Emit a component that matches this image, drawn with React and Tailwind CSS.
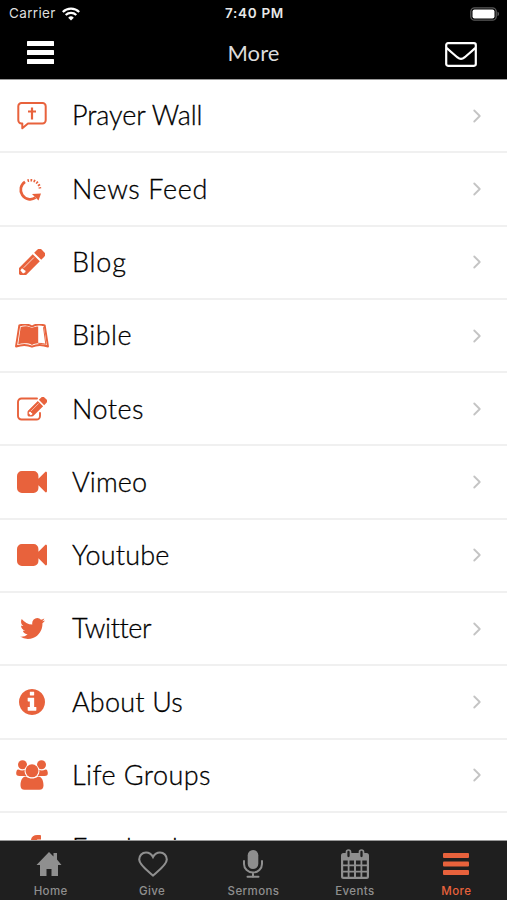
import { LuChevronRight } from "react-icons/lu";

const Svg = ({ box, className, children }) => (
  <svg viewBox={box} className={className} fill="currentColor" preserveAspectRatio="none">
    {children}
  </svg>
);

const PrayerIcon = () => (
  <Svg box="0 0 30 28" className="w-[30px] h-7">
    <path d="M4.5 1h21a3.2 3.2 0 0 1 3.2 3.2v14a3.2 3.2 0 0 1-3.2 3.2H11L5.3 26.300V21.4H4.5A3.2 3.2 0 0 1 1.3 18.2V4.2A3.2 3.2 0 0 1 4.5 1z" fill="none" stroke="currentColor" strokeWidth="2" strokeLinejoin="round" />
    <path d="M15 5.5v12M11 9.500h8" fill="none" stroke="currentColor" strokeWidth="2.200" />
  </Svg>
);

const FeedIcon = () => (
  <Svg box="0 0 24 24" className="w-6 h-6 -ml-1 mt-0.5">
    <path d="M7 3.800A9 9 0 1 0 17.500 19.700" fill="none" stroke="currentColor" strokeWidth="2.700" />
    <path d="M14 16l9-.5-2.500 7z" />
    <path d="M9.500 2.800A9.300 9.300 0 0 1 22 10.500" fill="none" stroke="currentColor" strokeWidth="2.600" strokeDasharray="1.600 1.500" />
  </Svg>
);

// Lápiz inclinado, compartido por Blog y Notes
const PencilShape = () => (
  <g transform="translate(.3 25.700) rotate(-45)">
    <path d="M.3 0v-1.500L2 -3.500Q3 -5 5 -5H24V5H5Q3 5 2 3.500L.3 1.500z" />
    <path d="M26 -5H30Q33.500 -5 33.500 -2V2Q33.500 5 30 5H26z" />
    <path d="M3.800 -2.200L6 -2.600Q7.800 -1.500 6.500 0Q8 1.500 6 2.600L3.500 1.800z" fill="#fff" />
    <path d="M8 -1.800H22.500" stroke="#fff" strokeWidth=".7" />
  </g>
);

const PencilIcon = () => (
  <Svg box="0 0 26 26" className="w-[26px] h-[26px]">
    <PencilShape />
  </Svg>
);

const BibleIcon = () => (
  <Svg box="0 0 34 24" className="w-[34px] h-6">
    <path d="M17 2.500C13.500 .2 8 .2 4.300 1.500L1 22.500c5-1.800 11.500-2 16 .2 4.500-2.200 11-2 16-.2L29.700 1.500C26 .2 20.500 .2 17 2.500z" fill="none" stroke="currentColor" strokeWidth="1.900" strokeLinejoin="round" />
    <path d="M17 4C13.500 1.800 9 1.800 5.700 3L3.200 20.300c4.300-1.300 9.800-1.500 13.800.6 1.600-1 3.700-1.500 6.200-1.600V2.500c-2.300 0-4.300.5-6.200 1.500z" />
    <path d="M23.200 19.300c2.800-.1 5.200.3 7.600 1L28.500 3.200" fill="none" stroke="currentColor" strokeWidth="1" />
  </Svg>
);

const NotesIcon = () => (
  <Svg box="0 0 30 24" className="w-[30px] h-6">
    <path d="M20 1.500H4.500A3.500 3.500 0 0 0 1 5v14a3.500 3.500 0 0 0 3.500 3.500h15A3.500 3.500 0 0 0 23 19v-3" fill="none" stroke="currentColor" strokeWidth="1.900" strokeLinecap="round" />
    <svg x="10.500" y="0" width="19.500" height="19.500" viewBox="0 0 26 26">
      <PencilShape />
    </svg>
  </Svg>
);

const VideoIcon = () => (
  <Svg box="0 256 1792 1280" className="w-[30px] h-[22px]">
    <path d="M1792 352v1088q0 42-39 59-13 5-25 5-27 0-45-19l-403-403v166q0 119-84.500 203.500t-203.500 84.500h-704q-119 0-203.500-84.500t-84.500-203.500v-704q0-119 84.500-203.500t203.500-84.500h704q119 0 203.500 84.500t84.500 203.500v165l403-402q18-19 45-19 12 0 25 5 39 17 39 59z" />
  </Svg>
);

const TwitterIcon = () => (
  <Svg box="108 256 1576 1280" className="w-[25px] h-[21px]">
    <path d="M1684 408q-67 98-162 167 1 14 1 42 0 130-38 259.500t-115.500 248.500-184.500 210.500-258 146-323 54.500q-271 0-496-145 35 4 78 4 225 0 401-138-105-2-188-64.500t-114-159.500q33 5 61 5 43 0 85-11-112-23-185.500-111.500t-73.500-205.500v-4q68 38 146 41-66-44-105-115t-39-154q0-88 44-163 121 149 294.500 238.500t371.500 99.500q-8-38-8-74 0-134 94.500-228.500t228.500-94.500q140 0 236 102 109-21 205-78-37 115-142 178 93-10 186-50z" />
  </Svg>
);

const InfoIcon = () => (
  <Svg box="128 128 1536 1536" className="w-[26px] h-[26px]">
    <path d="M1152 1376v-160q0-14-9-23t-23-9h-96v-512q0-14-9-23t-23-9h-320q-14 0-23 9t-9 23v160q0 14 9 23t23 9h96v320h-96q-14 0-23 9t-9 23v160q0 14 9 23t23 9h448q14 0 23-9t9-23zm-128-896v-160q0-14-9-23t-23-9h-192q-14 0-23 9t-9 23v160q0 14 9 23t23 9h192q14 0 23-9t9-23zm640 416q0 209-103 385.500t-279.500 279.500-385.500 103-385.500-103-279.500-279.500-103-385.500 103-385.500 279.500-279.500 385.500-103 385.500 103 279.500 279.500 103 385.500z" />
  </Svg>
);

const GroupsIcon = () => (
  <Svg box="0 0 32 30" className="w-8 h-[30px]">
    <circle cx="6.500" cy="4.700" r="4.500" />
    <circle cx="25.500" cy="4.700" r="4.500" />
    <path d="M2.500 9.500c2.500 1.300 4.500 1.300 7 .1-.2 2.700.5 4.700 2 6.400H3.500C1 16 0 15 .2 12.800.4 11 1 9 2.500 9.500z" />
    <path d="M29.500 9.500c-2.500 1.300-4.500 1.300-7 .1.200 2.700-.5 4.700-2 6.400h8c2.500 0 3.500-1 3.300-3.200C31.600 11 31 9 29.500 9.500z" />
    <circle cx="16" cy="11" r="7.500" fill="#fff" />
    <circle cx="16" cy="10.800" r="6.500" />
    <path d="M10 16.500c4 2.800 8 2.800 12 0 4 0 5.500 4.500 5.500 9 0 2.800-1.500 4.200-4 4.200h-15c-2.500 0-4-1.400-4-4.200 0-4.500 1.500-9 5.500-9z" />
  </Svg>
);

const FacebookIcon = () => (
  <Svg box="0 0 16 28" className="w-4 h-7 ml-1">
    <path d="M15 .2v4.400h-2.600c-2 0-2.400 1-2.400 2.400v3.100h4.900l-.7 5H10V28H4.800V15.100H.5v-5h4.300V6.400C4.800 2.200 7.400 0 11.200 0c1.800 0 3.300.1 3.800.2z" />
  </Svg>
);

const items = [
  { label: "Prayer Wall", Icon: PrayerIcon, spacing: "tracking-[-0.1px]" },
  { label: "News Feed", Icon: FeedIcon, spacing: "tracking-[0.6px]" },
  { label: "Blog", Icon: PencilIcon, spacing: "tracking-[0.8px]" },
  { label: "Bible", Icon: BibleIcon, spacing: "tracking-[0.5px]" },
  { label: "Notes", Icon: NotesIcon, spacing: "tracking-[0.5px]" },
  { label: "Vimeo", Icon: VideoIcon, spacing: "tracking-[0.1px]" },
  { label: "Youtube", Icon: VideoIcon, spacing: "tracking-[0.2px]" },
  { label: "Twitter", Icon: TwitterIcon, spacing: "tracking-[-0.4px]" },
  { label: "About Us", Icon: InfoIcon, spacing: "tracking-[0.2px]" },
  { label: "Life Groups", Icon: GroupsIcon, spacing: "tracking-[0.4px]" },
  { label: "Facebook", Icon: FacebookIcon, spacing: "tracking-[0.3px]" },
];

const HomeIcon = () => (
  <Svg box="0 0 26 26" className="w-[26px] h-[26px] -ml-1">
    <path d="M13 1l4.500 4.500V2h3.500v6.500L25.500 14H22v11h-6.500v-7h-5v7H4V14H.5z" />
  </Svg>
);

const HeartIcon = () => (
  <Svg box="0 0 30 26" className="w-[30px] h-[26px] ml-0.5">
    <path d="M15 24.500C10 20 1.200 14 1.200 8.500 1.200 4.500 4.200 1.500 8 1.500c3 0 5.500 1.700 7 4.500 1.500-2.800 4-4.500 7-4.500 3.800 0 6.800 3 6.800 7 0 5.500-8.800 11.500-13.800 16z" fill="none" stroke="currentColor" strokeWidth="2.100" />
  </Svg>
);

const MicIcon = () => (
  <Svg box="0 0 20 28" className="w-5 h-7">
    <rect x="4.700" y="0" width="10.600" height="19" rx="5.300" />
    <path d="M1 11v3a9 8.500 0 0 0 18 0v-3M10 22.500V27M4.500 26.800h11" fill="none" stroke="currentColor" strokeWidth="2" strokeLinecap="round" />
  </Svg>
);

const CalendarIcon = () => (
  <Svg box="0 0 28 30" className="w-7 h-[30px]">
    <path d="M2.500 4h23A2.500 2.500 0 0 1 28 6.500v21a2.500 2.500 0 0 1-2.500 2.500h-23A2.500 2.500 0 0 1 0 27.500v-21A2.500 2.500 0 0 1 2.500 4z" />
    <path d="M2.200 11.500h4.500v4H2.200zM8.500 11.500h4.500v4H8.500zM15 11.500h4.500v4H15zM21.300 11.500h4.500v4h-4.500zM2.200 17.300h4.500v4.400H2.200zM8.500 17.300h4.500v4.400H8.500zM15 17.300h4.500v4.400H15zM21.300 17.300h4.500v4.400h-4.500zM2.200 23.500h4.500v4.300H2.200zM8.500 23.500h4.500v4.300H8.500zM15 23.500h4.500v4.300H15zM21.300 23.500h4.500v4.300h-4.500z" fill="#1f1f1f" />
    <rect x="5.500" y="1" width="4" height="8" rx="2" fill="#1f1f1f" stroke="currentColor" strokeWidth="1.700" />
    <rect x="18.500" y="1" width="4" height="8" rx="2" fill="#1f1f1f" stroke="currentColor" strokeWidth="1.700" />
  </Svg>
);

const MoreIcon = () => (
  <Svg box="0 0 26 22" className="w-[26px] h-[22px] -ml-px">
    <rect width="26" height="5" rx="1" />
    <rect y="8.500" width="26" height="5" rx="1" />
    <rect y="17" width="26" height="5" rx="1" />
  </Svg>
);

const tabs = [
  { label: "Home", Icon: HomeIcon },
  { label: "Give", Icon: HeartIcon },
  { label: "Sermons", Icon: MicIcon },
  { label: "Events", Icon: CalendarIcon },
  { label: "More", Icon: MoreIcon, active: true },
];

function StatusBar() {
  return (
    <div className="grid grid-cols-3 items-center h-[27px] pl-[9px] pr-[7px] font-['Inter'] text-[13.5px]">
      <div className="flex items-center gap-1.5 text-[#dedede]">
        <span className="tracking-[0.35px]">Carrier</span>
        <Svg box="0 0 18 14" className="w-[18px] h-3.5 text-white">
          <path d="M9 13.500l-2.800-2.800a4 4 0 0 1 5.600 0z" />
          <path d="M.8 5a11.700 11.700 0 0 1 16.400 0M3.700 8a7.600 7.600 0 0 1 10.600 0" fill="none" stroke="currentColor" strokeWidth="2.200" />
        </Svg>
      </div>
      <div className="text-center font-semibold text-[13.5px] tracking-[0.7px] text-[#e8e8e8] whitespace-nowrap">7:40 PM</div>
      <div className="flex justify-end">
        <Svg box="0 0 30 14" className="w-[30px] h-3.5">
          <rect x=".8" y=".8" width="25.400" height="12.400" rx="3.800" fill="none" stroke="#5a5a5a" strokeWidth="1.300" />
          <rect x="2.500" y="2.500" width="22" height="9" rx="2" fill="#fff" />
          <path d="M27.500 4.800c2 .6 2 3.800 0 4.400z" fill="#5a5a5a" />
        </Svg>
      </div>
    </div>
  );
}

function App() {
  return (
    <div className="flex flex-col w-[507px] h-[900px] overflow-hidden bg-white">
      <header className="h-20 shrink-0 bg-black text-white border-b border-[#999]">
        <StatusBar />
        <div className="grid grid-cols-3 items-center h-[50px] pl-[27px] pr-[30px]">
          <button className="justify-self-start">
            <Svg box="0 0 27 23" className="w-[27px] h-[23px]">
              <rect width="27" height="5" rx=".5" />
              <rect y="9" width="27" height="5" rx=".5" />
              <rect y="18" width="27" height="5" rx=".5" />
            </Svg>
          </button>
          <h1 className="text-center pl-[3px] font-['Lato'] text-[22px] tracking-[0.1px] text-[#dcdcdc]">More</h1>
          <button className="justify-self-end mt-1">
            <Svg box="0 0 32 26" className="w-8 h-[25px]">
              <path d="M3 1.200h26a1.800 1.800 0 0 1 1.800 1.800v20a1.800 1.800 0 0 1-1.800 1.800H3A1.800 1.800 0 0 1 1.200 23V3A1.800 1.800 0 0 1 3 1.200zM1.500 6c4 4 7 6.500 11 10 2.500 2.200 4.500 2.200 7 0 4-3.500 7-6 11-10" fill="none" stroke="currentColor" strokeWidth="2.200" />
            </Svg>
          </button>
        </div>
      </header>

      <main className="flex-1 min-h-0 overflow-hidden">
        {items.map(({ label, Icon, spacing }) => (
          <div key={label} className="flex items-center h-[73.3px] border-b-2 border-[#f0f0f0] pr-[19px]">
            <div className="flex justify-center w-16 shrink-0 text-[#e8623c]">
              <Icon />
            </div>
            <span className={`flex-1 pl-2 font-['Lato'] font-light text-[27px] text-black [-webkit-text-stroke:0.3px_black] ${spacing}`}>{label}</span>
            <LuChevronRight className="w-[22px] h-[22px] text-[#c4c4c4]" />
          </div>
        ))}
      </main>

      {/* Barra inferior */}
      <nav className="grid grid-cols-5 h-[60px] shrink-0 bg-[#1f1f1f] border-t border-[#999]">
        {tabs.map(({ label, Icon, active }) => (
          <div key={label} className={`flex flex-col items-center ${active ? "text-[#e8623c]" : "text-[#8f8f8f]"}`}>
            <div className="flex items-center h-[42px] pt-1">
              <Icon />
            </div>
            <span className="font-['Inter'] font-medium text-[11.5px] leading-4 tracking-[0.4px]">{label}</span>
          </div>
        ))}
      </nav>
    </div>
  );
}

export default App;
